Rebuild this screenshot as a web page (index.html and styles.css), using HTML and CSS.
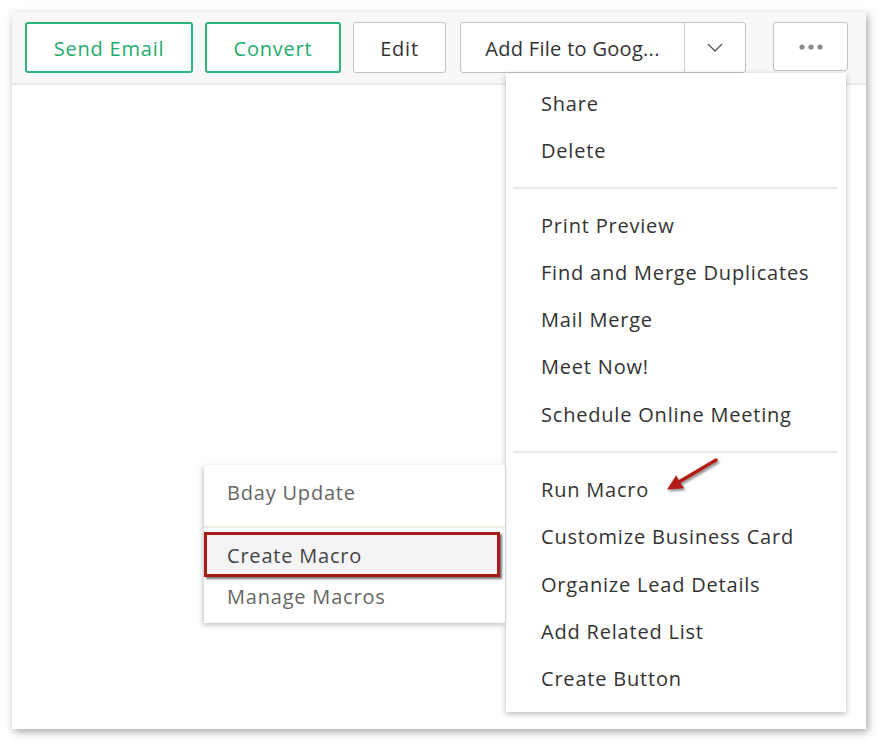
FILE: index.html
```html
<!DOCTYPE html>
<html>
<head>
<meta charset="utf-8">
<link rel="stylesheet" href="styles.css">
</head>
<body>
<div class="frame">
  <div class="toolbar">
    <button class="btn btn-green btn-send">Send Email</button>
    <button class="btn btn-green btn-convert">Convert</button>
    <button class="btn btn-gray btn-edit">Edit</button>
    <div class="split">
      <span class="split-main">Add File to Goog...</span>
      <span class="split-caret">
        <svg width="16" height="9" viewBox="0 0 16 9"><path d="M1 1 L8 8 L15 1" fill="none" stroke="#555" stroke-width="1.3"/></svg>
      </span>
    </div>
    <button class="btn btn-gray btn-more">
      <svg width="24" height="6" viewBox="0 0 24 6"><circle cx="3" cy="3" r="2.6" fill="#8a8a8a"/><circle cx="12" cy="3" r="2.6" fill="#8a8a8a"/><circle cx="21" cy="3" r="2.6" fill="#8a8a8a"/></svg>
    </button>
  </div>
  <div class="content"></div>

  <div class="menu">
    <div class="item">Share</div>
    <div class="item">Delete</div>
    <div class="sep sep1"></div>
    <div class="item">Print Preview</div>
    <div class="item">Find and Merge Duplicates</div>
    <div class="item">Mail Merge</div>
    <div class="item">Meet Now!</div>
    <div class="item">Schedule Online Meeting</div>
    <div class="sep sep2"></div>
    <div class="item">Run Macro</div>
    <div class="item">Customize Business Card</div>
    <div class="item">Organize Lead Details</div>
    <div class="item">Add Related List</div>
    <div class="item">Create Button</div>
  </div>

  <div class="submenu">
    <div class="sitem sitem-bday">Bday Update</div>
    <div class="ssep"></div>
    <div class="sitem sitem-create">Create Macro</div>
    <div class="sitem sitem-manage">Manage Macros</div>
  </div>

  <svg class="arrow" width="80" height="50" viewBox="0 0 80 50">
    <defs>
      <filter id="sh" x="-30%" y="-30%" width="160%" height="160%">
        <feDropShadow dx="1.5" dy="2" stdDeviation="1.2" flood-color="#000" flood-opacity="0.45"/>
      </filter>
    </defs>
    <g filter="url(#sh)">
      <path d="M26 30.5 L64 8" stroke="#b11d17" stroke-width="3.5" stroke-linecap="round" fill="none"/>
      <path d="M15 37.5 L24.2 23.2 L28 30.5 L32.2 36.2 Z" fill="#b11d17"/>
    </g>
  </svg>
</div>
</body>
</html>
```

FILE: styles.css
```css
* { box-sizing: border-box; }
html, body { margin: 0; padding: 0; background: #ffffff; }
body {
  font-family: "Open Sans", "Lato", sans-serif;
  letter-spacing: 0.8px;
  width: 878px;
  height: 741px;
  overflow: hidden;
}
.frame {
  position: relative;
  margin: 12px 0 0 12px;
  width: 854px;
  height: 717px;
  background: #ffffff;
  box-shadow: 2px 3px 8px rgba(0, 0, 0, 0.35);
}
.toolbar {
  height: 73px;
  background: #f8f8f8;
  border-bottom: 2px solid #e9e9e9;
  display: flex;
  align-items: flex-start;
  padding: 10px 0 0 13px;
}
.btn {
  font-family: inherit;
  letter-spacing: inherit;
  font-size: 20px;
  height: 51px;
  border-radius: 3px;
  background: #ffffff;
  display: flex;
  align-items: center;
  justify-content: center;
  padding: 2px 0 0 0;
  margin: 0;
}
.btn-green {
  border: 2px solid #2bb57a;
  color: #22ac6c;
}
.btn-gray {
  border: 1.5px solid #c2c2c2;
  color: #333333;
}
.btn-send { width: 168px; }
.btn-convert { width: 136px; margin-left: 12px; }
.btn-edit { width: 93px; margin-left: 12px; }
.split {
  margin-left: 14px;
  width: 286px;
  height: 51px;
  border: 1.5px solid #c2c2c2;
  border-radius: 3px;
  background: #ffffff;
  display: flex;
  font-size: 20px;
  color: #333333;
}
.split-main {
  width: 224px;
  display: flex;
  align-items: center;
  justify-content: center;
  padding-top: 2px;
  letter-spacing: 0.3px;
  border-right: 1.5px solid #d0d0d0;
}
.split-caret {
  flex: 1;
  display: flex;
  align-items: center;
  justify-content: center;
}
.btn-more { width: 75px; height: 49px; margin-left: 27px; padding: 0; }
.content { height: 642px; }

.menu {
  position: absolute;
  left: 494px;
  top: 61px;
  width: 340px;
  height: 639px;
  background: #ffffff;
  box-shadow: 0 2px 6px rgba(0, 0, 0, 0.28);
  padding: 6px 0 0 0;
}
.item {
  height: 47.3px;
  line-height: 49px;
  padding-left: 35px;
  font-size: 20px;
  color: #333333;
  white-space: nowrap;
}
.sep {
  height: 2px;
  background: #e8e8e8;
  margin: 0 9px 0 7px;
}
.sep1 { margin-top: 13px; margin-bottom: 12px; }
.sep2 { margin-top: 14px; margin-bottom: 12px; }

.submenu {
  position: absolute;
  left: 192px;
  top: 453px;
  width: 301px;
  height: 158px;
  background: #ffffff;
  box-shadow: -1px 2px 5px rgba(0, 0, 0, 0.25);
  padding-top: 5px;
}
.sitem {
  font-size: 20px;
  padding-left: 23px;
  white-space: nowrap;
}
.sitem-bday {
  height: 46px;
  line-height: 46px;
  color: #666666;
}
.ssep {
  height: 2px;
  background: #f1ede2;
  margin: 10px 0 4px 0;
}
.sitem-create {
  height: 45px;
  line-height: 41px;
  width: 296px;
  background: #f4f4f4;
  border: 3px solid #a61d17;
  box-shadow: 2px 2px 2px rgba(0, 0, 0, 0.55);
  color: #444444;
  padding-left: 20px;
}
.sitem-manage {
  height: 40px;
  line-height: 40px;
  color: #666666;
}
.arrow {
  position: absolute;
  left: 640px;
  top: 440px;
}
```
